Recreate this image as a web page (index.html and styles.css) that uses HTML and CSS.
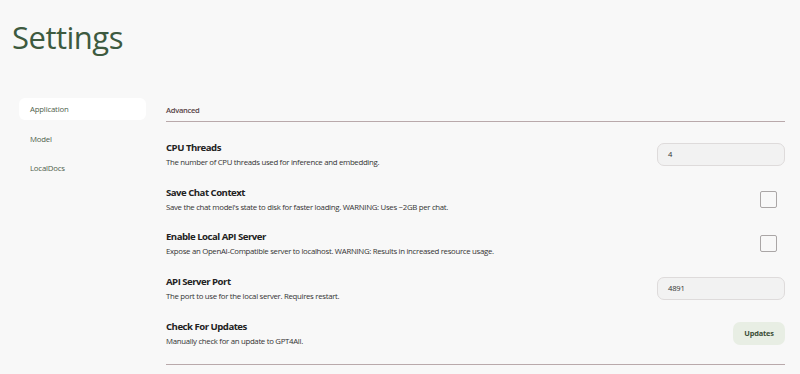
FILE: index.html
```html
<!DOCTYPE html>
<html lang="en">
  <head>
    <title>Settings</title>
    <link rel="stylesheet" href="styles.css">
  </head>
  <body>
    <h1 class="title">Settings</h1>
    <div class="layout">
      <ul class="nav">
        <li class="active">Application</li>
        <li>Model</li>
        <li>LocalDocs</li>
      </ul>
      <div class="main">
        <div class="section">Advanced</div>
        <div class="row">
          <div class="label">
            <div class="name">CPU Threads</div>
            <div class="desc">The number of CPU threads used for inference and embedding.</div>
          </div>
          <div class="field">4</div>
        </div>
        <div class="row">
          <div class="label">
            <div class="name">Save Chat Context</div>
            <div class="desc">Save the chat model's state to disk for faster loading. WARNING: Uses ~2GB per chat.</div>
          </div>
          <div class="check"></div>
        </div>
        <div class="row">
          <div class="label">
            <div class="name">Enable Local API Server</div>
            <div class="desc">Expose an OpenAI-Compatible server to localhost. WARNING: Results in increased resource usage.</div>
          </div>
          <div class="check"></div>
        </div>
        <div class="row">
          <div class="label">
            <div class="name">API Server Port</div>
            <div class="desc">The port to use for the local server. Requires restart.</div>
          </div>
          <div class="field">4891</div>
        </div>
        <div class="row">
          <div class="label">
            <div class="name">Check For Updates</div>
            <div class="desc">Manually check for an update to GPT4All.</div>
          </div>
          <div class="button">Updates</div>
        </div>
        <div class="rule"></div>
      </div>
    </div>
  </body>
</html>
```

FILE: styles.css
```css
body {background:#f8f8f8;color:#222;margin:0;font-family:"Open Sans",sans-serif;overflow:hidden}
.title {margin:0;padding:17px 0 0 12px;font-weight:400;font-size:31px;line-height:40px;color:#3d5a3f;letter-spacing:-0.5px}
.layout {display:flex;margin-top:41px}
.nav {list-style:none;margin:0 0 0 19px;padding:0;width:127px}
.nav li {height:22px;line-height:22px;padding-left:11px;margin-bottom:7.5px;font-size:7.8px;letter-spacing:-0.2px;color:#4f5f4c;border-radius:6px}
.nav li.active {background:#fff}
.main {margin-left:20px;width:619px}
.section {font-size:7.6px;letter-spacing:-0.3px;font-weight:600;color:#5a4548;padding:7px 0 5px;border-bottom:1px solid #b9a9ab;height:11px}
.row {display:flex;align-items:center;justify-content:space-between;height:44.75px}
.section + .row {margin-top:10px}
.name {font-size:9.6px;letter-spacing:-0.5px;font-weight:700;color:#222;line-height:14px}
.desc {font-size:7.8px;letter-spacing:-0.3px;color:#333;line-height:12px;margin-top:1px}
.field {width:116px;height:21px;line-height:21px;padding-left:10px;font-size:7.6px;letter-spacing:-0.2px;color:#333;background:#f2f2f2;border:1px solid #dedbdb;border-radius:7px}
.check {width:15px;height:15px;border:1px solid #aaa6a6;border-radius:2px;margin-right:8px}
.button {width:52px;height:23px;line-height:23px;text-align:center;font-size:7.4px;letter-spacing:-0.2px;font-weight:700;color:#3a4d36;background:#e8eee4;border-radius:7px}
.rule {border-top:1px solid #b9a9ab;margin-top:8px}
```
